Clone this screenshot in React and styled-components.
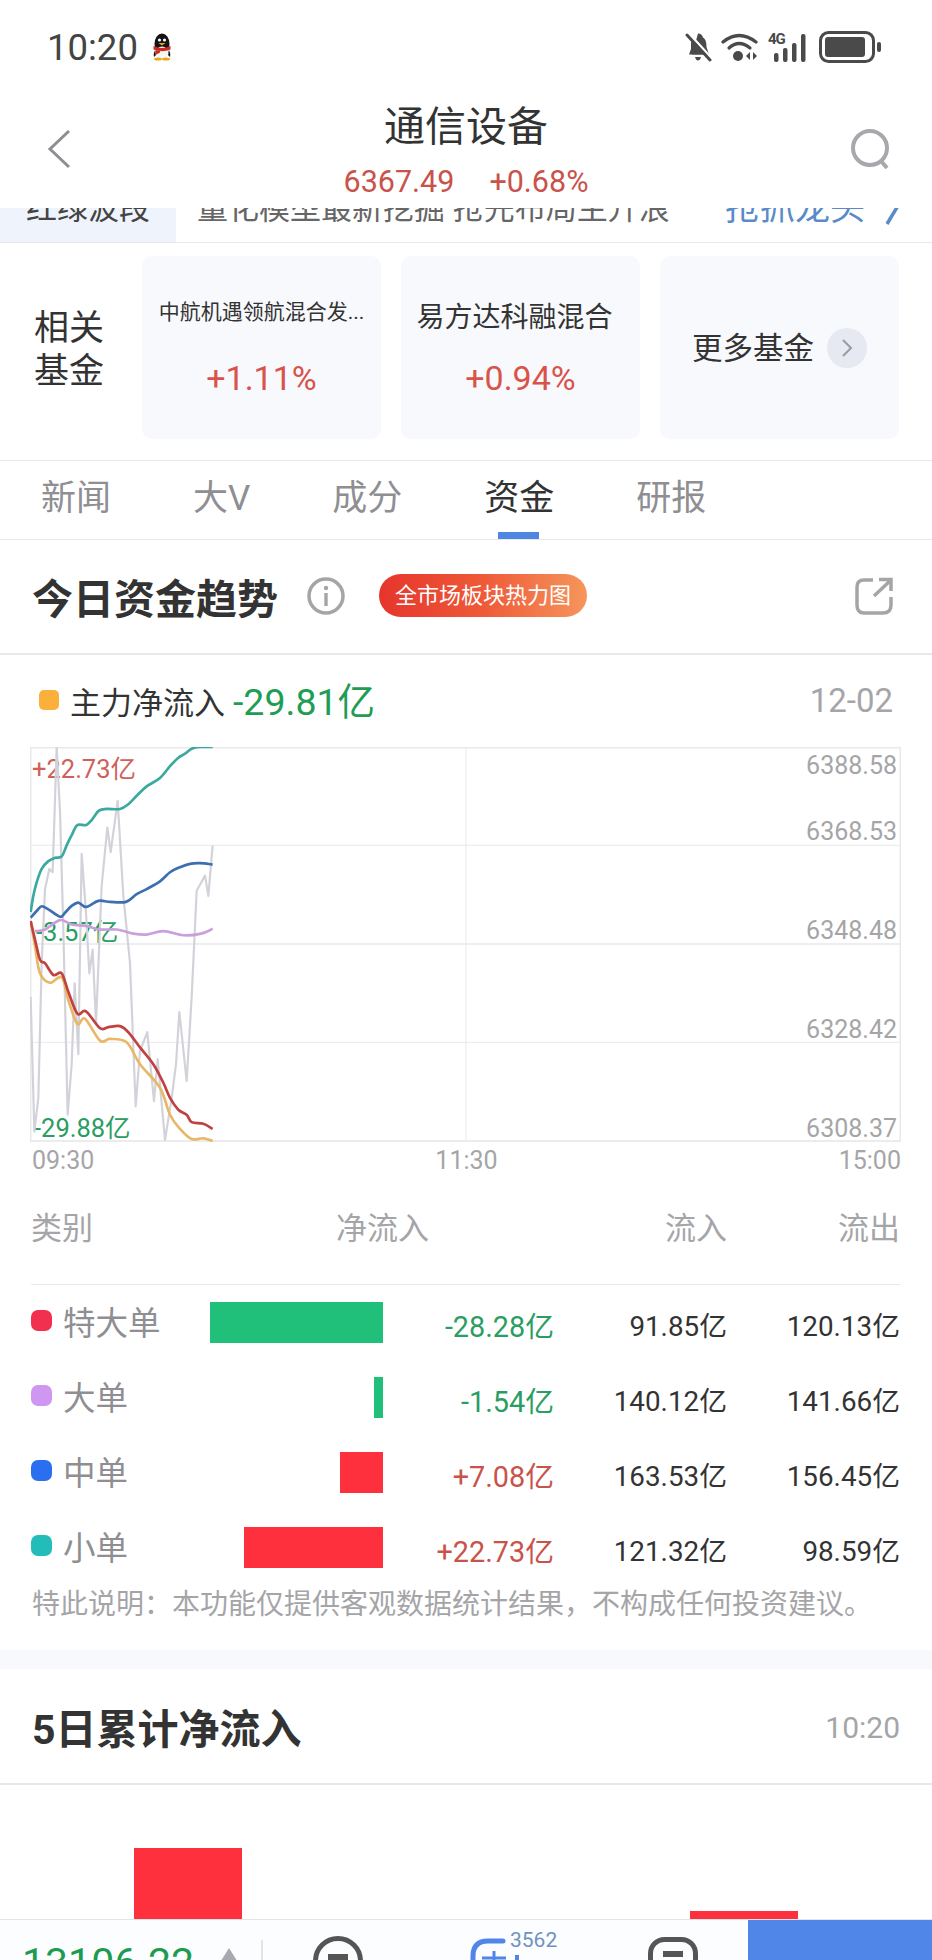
import React from 'react';
import styled, {createGlobalStyle} from 'styled-components';

const GlobalStyle = createGlobalStyle`
  html, body {
    margin: 0;
    padding: 0;
    background: #ffffff;
  }
  body {
    font-family: Roboto, "Noto Sans CJK SC", sans-serif;
    color: #333333;
  }
  * {
    box-sizing: border-box;
  }
`;

const Page = styled.div`
  width: 932px;
  height: 1960px;
  overflow: hidden;
  background: #ffffff;
`;

const StatusBar = styled.div`
  display: flex;
  align-items: center;
  height: 75px;
  padding: 19px 51px 0 47px;
`;
const Time = styled.span`
  font-size: 36.5px;
  color: #444444;
  margin-right: 14px;
`;
const StatusIcons = styled.div`
  display: flex;
  align-items: center;
  gap: 9px;
  margin-left: auto;
`;
const SignalBox = styled.div`
  position: relative;
  width: 42px;
  height: 30px;
`;
const FourG = styled.span`
  position: absolute;
  left: 0;
  top: -2px;
  font-size: 15px;
  line-height: 18px;
  font-weight: 700;
  letter-spacing: -1px;
  color: #4a4a4a;
`;

const NavHeader = styled.div`
  display: grid;
  grid-template-columns: 1fr auto 1fr;
  height: 133px;
  padding: 24px 40px 0 40px;
`;
const BackCell = styled.div`
  padding: 30px 0 0 7px;
`;
const SearchCell = styled.div`
  display: flex;
  justify-content: flex-end;
  padding-top: 30px;
`;
const TitleBlock = styled.div`
  display: flex;
  flex-direction: column;
  align-items: center;
`;
const Title = styled.div`
  font-size: 41px;
  line-height: 56px;
  color: #333333;
`;
const Quote = styled.div`
  display: flex;
  gap: 35px;
  margin-top: 9px;
  font-size: 30.5px;
  line-height: 36px;
  color: #c9524a;
`;

const Ticker = styled.div`
  display: flex;
  height: 35px;
  overflow: hidden;
  border-bottom: 1px solid #e8e8ec;
`;
const TickerTag = styled.div`
  width: 176px;
  padding-left: 26px;
  background: #eff4fc;
  font-size: 31px;
  line-height: 40px;
  color: #444444;
  & > span {
    display: block;
    margin-top: -19px;
  }
`;
const TickerText = styled.div`
  width: 528px;
  padding-left: 21px;
  font-size: 31px;
  line-height: 40px;
  color: #666666;
  white-space: nowrap;
  & > span {
    display: block;
    margin-top: -19px;
  }
`;
const TickerLink = styled.div`
  display: flex;
  gap: 20px;
  padding-left: 21px;
  font-size: 35px;
  line-height: 40px;
  color: #5b8ac8;
  white-space: nowrap;
  & > span {
    display: block;
    margin-top: -19px;
  }
  & > svg {
    margin-top: -8px;
  }
`;

const FundRow = styled.div`
  display: flex;
  align-items: flex-start;
  height: 218px;
  padding: 13px 0 0 34px;
  border-bottom: 1px solid #e8e8ec;
`;
const FundLabel = styled.div`
  width: 108px;
  padding-top: 51px;
  font-size: 35px;
  line-height: 43px;
  color: #333333;
`;
const FundCards = styled.div`
  display: flex;
  gap: 20px;
`;
const FundCard = styled.div`
  display: flex;
  flex-direction: column;
  align-items: center;
  justify-content: center;
  gap: 26px;
  width: 239px;
  height: 183px;
  padding-bottom: 5px;
  border-radius: 10px;
  background: #f8f9fc;
`;
const FundName = styled.div`
  font-size: ${props => props.$size}px;
  line-height: 40px;
  color: #333333;
  white-space: nowrap;
  ${props => props.$wide && 'margin: 6px 12px 0 0;'}
`;
const FundPct = styled.div`
  font-size: 34px;
  line-height: 40px;
  color: #d9534a;
  ${props => props.$wide && 'margin-top: -6px;'}
`;
const MoreCard = styled(FundCard)`
  flex-direction: row;
  gap: 13px;
  padding: 0 0 3px;
  font-size: 30.5px;
  color: #333333;
`;
const MoreArrow = styled.span`
  display: flex;
  align-items: center;
  justify-content: center;
  width: 40px;
  height: 40px;
  margin-top: 3px;
  border-radius: 50%;
  background: #e6e8f2;
`;

const Tabs = styled.div`
  display: flex;
  gap: 82px;
  height: 79px;
  padding-left: 41px;
  border-bottom: 1px solid #e8e8ec;
`;
const Tab = styled.div`
  position: relative;
  font-size: 35px;
  line-height: 76px;
  color: ${props => (props.$active ? '#333333' : '#8e8e93')};
  ${props =>
    props.$active &&
    `&::after {
      content: '';
      position: absolute;
      left: 14px;
      bottom: 0;
      width: 41px;
      height: 7px;
      background: #4f86e3;
    }`}
`;

const SectionHead = styled.div`
  display: flex;
  align-items: center;
  height: 115px;
  padding: 0 39px 2px 32px;
  border-bottom: 2px solid #e8e8ec;
`;
const SectionTitle = styled.div`
  font-size: 41px;
  font-weight: 700;
  color: #333333;
`;
const InfoWrap = styled.div`
  display: flex;
  margin-left: 29px;
`;
const HeatBadge = styled.div`
  margin-left: 34px;
  width: 208px;
  height: 43px;
  border-radius: 22px;
  background: linear-gradient(90deg, #e6352c 0%, #ee5a38 50%, #f6955c 100%);
  color: #ffffff;
  font-size: 22px;
  line-height: 43px;
  text-align: center;
`;
const ShareWrap = styled.div`
  display: flex;
  margin-left: auto;
`;

const LegendRow = styled.div`
  display: flex;
  align-items: center;
  height: 92px;
  padding: 0 39px 2px 39px;
`;
const LegendDot = styled.span`
  width: 20px;
  height: 20px;
  border-radius: 5px;
  background: #fbb03b;
  margin-right: 11px;
`;
const LegendText = styled.span`
  font-size: 31px;
  color: #333333;
`;
const LegendValue = styled.span`
  margin: 0 0 4px 8px;
  font-size: 37.5px;
  color: #1f9d55;
`;
const LegendDate = styled.span`
  margin-left: auto;
  font-size: 33px;
  color: #a5a5a8;
`;

const ChartBox = styled.div`
  position: relative;
  width: 871px;
  height: 395px;
  margin-left: 30px;
`;
const ChartSvg = styled.svg`
  position: absolute;
  inset: 0;
  display: block;
`;
const PriceLabel = styled.span`
  position: absolute;
  right: 4px;
  top: ${props => props.$top}px;
  font-size: 25px;
  line-height: 30px;
  color: #a5a5a8;
`;
const FlowLabel = styled.span`
  position: absolute;
  left: ${props => props.$left}px;
  top: ${props => props.$top}px;
  font-size: 25.5px;
  line-height: 30px;
  color: ${props => props.$color};
`;
const AxisRow = styled.div`
  display: flex;
  justify-content: space-between;
  align-items: center;
  width: 869px;
  height: 36px;
  margin-left: 32px;
  font-size: 25px;
  color: #a5a5a8;
`;

const TableHead = styled.div`
  display: grid;
  grid-template-columns: 305px 1fr 173px 173px;
  margin: 0 32px 0 31px;
  padding: 31px 0 35px;
  border-bottom: 1px solid #e8e8ec;
  font-size: 31px;
  line-height: 40px;
  color: #a5a5a8;
`;
const HeadRight = styled.span`
  text-align: right;
`;
const TableRow = styled.div`
  display: grid;
  grid-template-columns: 179px 173px 171px 173px 173px;
  align-items: center;
  height: 75px;
  margin: 0 32px 0 31px;
`;
const RowName = styled.div`
  display: flex;
  align-items: center;
  gap: 11px;
  padding-bottom: 4px;
  font-size: 32.5px;
  color: #8e8e93;
`;
const RowDot = styled.span`
  width: 21px;
  height: 21px;
  border-radius: 7px;
  background: ${props => props.$color};
`;
const BarCell = styled.div`
  display: flex;
  justify-content: flex-end;
`;
const Bar = styled.div`
  height: 41px;
  background: ${props => (props.$up ? '#ff303e' : '#20c07b')};
`;
const NetValue = styled.div`
  padding-top: 3px;
  text-align: right;
  font-size: 28.8px;
  color: ${props => (props.$up ? '#c9524a' : '#2a9d62')};
`;
const FlowValue = styled.div`
  padding-top: 3px;
  text-align: right;
  font-size: 27.8px;
  color: #333333;
`;
const Notice = styled.div`
  padding: 2px 0 27px 32px;
  font-size: 28px;
  line-height: 36px;
  color: #a5a5a8;
  white-space: nowrap;
`;
const GapBand = styled.div`
  height: 19px;
  background: #f8f9fc;
`;

const FiveDayHead = styled.div`
  display: flex;
  align-items: center;
  justify-content: space-between;
  height: 116px;
  padding: 0 32px 0 32px;
  border-bottom: 2px solid #e8e8ec;
`;
const FiveDayTitle = styled.div`
  font-size: 41px;
  font-weight: 700;
  color: #333333;
`;
const FiveDayTime = styled.div`
  padding-top: 2px;
  font-size: 30px;
  color: #a5a5a8;
`;
const FiveDayChart = styled.div`
  display: grid;
  grid-template-columns: repeat(5, 139px);
  align-items: end;
  height: 134px;
  padding-left: 118px;
`;
const FiveDayCol = styled.div`
  display: flex;
  justify-content: center;
`;
const FiveDayBar = styled.div`
  width: 108px;
  background: #ff303e;
`;

const BottomBar = styled.div`
  display: flex;
  height: 41px;
  overflow: hidden;
  border-top: 1px solid #e4e4e6;
  background: #fcfdfe;
`;
const IndexCell = styled.div`
  display: flex;
  width: 263px;
  height: 60px;
  margin-top: 20px;
  padding-left: 22px;
  border-right: 2px solid #e4e4e6;
`;
const IndexValue = styled.span`
  font-size: 41px;
  line-height: 48px;
  margin-top: -1px;
  color: #1c9c50;
`;
const IndexArrow = styled.span`
  width: 0;
  height: 0;
  margin: 8px 0 0 25px;
  border-left: 10px solid transparent;
  border-right: 10px solid transparent;
  border-bottom: 16px solid #a8a8b0;
`;
const Tools = styled.div`
  display: grid;
  grid-template-columns: 157px 178px 1fr;
  flex: 1;
  padding-left: 50px;
`;
const Tool = styled.div`
  position: relative;
  padding-top: ${props => props.$top}px;
`;
const ToolCount = styled.span`
  position: absolute;
  left: 40px;
  top: 8px;
  font-size: 21px;
  line-height: 24px;
  color: #6f92c0;
`;
const ActionButton = styled.div`
  width: 184px;
  background: #4f86e8;
`;

const Penguin = () => (
  <svg width="20" height="28" viewBox="0 0 20 28">
    <ellipse cx="10" cy="11" rx="7.5" ry="10.5" fill="#141414" />
    <path d="M3 17 Q1 21 2 24 L5 21 Z M17 17 Q19 21 18 24 L15 21 Z" fill="#141414" />
    <ellipse cx="10" cy="20" rx="6.5" ry="6.5" fill="#f6f6f6" />
    <circle cx="7.5" cy="7" r="1.6" fill="#ffffff" />
    <circle cx="12.5" cy="7" r="1.6" fill="#ffffff" />
    <path d="M6.5 10 H13.5 L10 12.5 Z" fill="#e8a818" />
    <path d="M1.5 13 Q10 17 18.5 13 L18.5 16.5 Q10 20 1.5 16.5 Z" fill="#cf2a20" />
    <path d="M4 17 L3.5 22 L8 19.5 L8 18 Z" fill="#cf2a20" />
    <ellipse cx="6" cy="26" rx="4" ry="1.6" fill="#e8a818" />
    <ellipse cx="14" cy="26" rx="4" ry="1.6" fill="#e8a818" />
  </svg>
);

const BellOff = () => (
  <svg width="28" height="30" viewBox="0 0 28 30">
    <path d="M14 1.5 C17 1.5 18.5 3.5 19 5.5 C22 7.5 22.5 11 22.5 15 L25 22.5 L8 22.5 Z" fill="#4a4a4a" />
    <path d="M5 22.5 L7 17 L7 12 C7 10.5 7.2 9 8 8 L20 22.5 Z" fill="#4a4a4a" />
    <path d="M11 25 H17 Q16 28.5 14 28.5 Q12 28.5 11 25 Z" fill="#4a4a4a" />
    <path d="M5 1.5 L28 26.5" stroke="#ffffff" strokeWidth="2.5" />
    <path d="M3 3 L26 28" stroke="#4a4a4a" strokeWidth="3" strokeLinecap="round" />
  </svg>
);

const Wifi = () => (
  <svg width="38" height="30" viewBox="0 0 38 30">
    <g fill="none" stroke="#4a4a4a" strokeWidth="3.2" strokeLinecap="round">
      <path d="M2 10 Q18 -3 35 10" />
      <path d="M8 16 Q18 7 29 16" />
    </g>
    <circle cx="17" cy="24" r="5" fill="#4a4a4a" />
    <path d="M29 20 V28 L25 24 Z M32 20 V28 L36 24 Z" fill="#4a4a4a" />
  </svg>
);

const Signal = () => (
  <svg width="42" height="30" viewBox="0 0 42 30">
    <g fill="#4a4a4a">
      <rect x="6" y="21" width="4.5" height="9" rx="2" />
      <rect x="15" y="16" width="4.5" height="14" rx="2" />
      <rect x="24" y="11" width="4.5" height="19" rx="2" />
      <rect x="33" y="2" width="4.5" height="28" rx="2" />
    </g>
  </svg>
);

const Battery = () => (
  <svg width="62" height="32" viewBox="0 0 62 32">
    <rect x="1.5" y="1.5" width="53" height="29" rx="8" fill="none" stroke="#4a4a4a" strokeWidth="3" />
    <rect x="6" y="6" width="40" height="20" rx="3" fill="#4a4a4a" />
    <rect x="58" y="11" width="4" height="10" rx="2" fill="#4a4a4a" />
  </svg>
);

const BackIcon = () => (
  <svg width="24" height="40" viewBox="0 0 24 40">
    <path d="M22 2 L3 20 L22 38" fill="none" stroke="#8e8e93" strokeWidth="3" />
  </svg>
);

const SearchIcon = () => (
  <svg width="42" height="40" viewBox="0 0 42 40">
    <circle cx="20" cy="19" r="17" fill="none" stroke="#a8a8ac" strokeWidth="4" />
    <path d="M31 32 L37 39" stroke="#a8a8ac" strokeWidth="4" />
  </svg>
);

const Chevron = () => (
  <svg width="12" height="20" viewBox="0 0 12 20">
    <path d="M2 2 L10 10 L2 18" fill="none" stroke="#9a9aa6" strokeWidth="2" />
  </svg>
);

const InfoIcon = () => (
  <svg width="38" height="38" viewBox="0 0 38 38">
    <circle cx="19" cy="19" r="17" fill="none" stroke="#a5a5a8" strokeWidth="3.5" />
    <circle cx="19" cy="11" r="2.2" fill="#a5a5a8" />
    <rect x="17.3" y="16" width="3.4" height="13" fill="#a5a5a8" />
  </svg>
);

const ShareIcon = () => (
  <svg width="38" height="38" viewBox="0 0 38 38">
    <g fill="none" stroke="#a5a5a8" strokeWidth="3.5">
      <path d="M18 3 H9 Q2 3 2 10 V28 Q2 36 9 36 H28 Q36 36 36 28 V20" />
      <path d="M19 19 L36 3 M24 2.5 H36 V14" />
    </g>
  </svg>
);

const TickerArrow = () => (
  <svg width="16" height="26" viewBox="0 0 16 26">
    <path d="M2 24 L14 4" stroke="#5b8ac8" strokeWidth="3.5" fill="none" />
  </svg>
);

const ToolRound = () => (
  <svg width="50" height="40" viewBox="0 0 50 40">
    <circle cx="25" cy="25" r="22.5" fill="none" stroke="#555555" strokeWidth="5" />
    <rect x="15" y="18" width="20" height="7" fill="#555555" />
  </svg>
);

const ToolPlus = () => (
  <svg width="50" height="40" viewBox="0 0 50 40">
    <path d="M33 3 H18 Q3 3 3 18 V40" fill="none" stroke="#4f86e8" strokeWidth="5" strokeLinecap="round" />
    <path d="M24 13 V40 M12 20 H36" fill="none" stroke="#4f86e8" strokeWidth="3" />
    <path d="M47 17 V40" fill="none" stroke="#4f86e8" strokeWidth="4" />
  </svg>
);

const ToolNote = () => (
  <svg width="50" height="40" viewBox="0 0 50 40">
    <rect x="2.5" y="2.5" width="45" height="60" rx="14" fill="none" stroke="#555555" strokeWidth="5" />
    <rect x="15" y="14" width="20" height="6" fill="#555555" />
  </svg>
);

// catmull-rom through the sampled points so the flow lines don't look angular
const toSmoothPath = str => {
  const pts = str.split(' ').map(p => p.split(',').map(Number));
  let d = `M${pts[0][0]} ${pts[0][1]}`;
  for (let i = 0; i < pts.length - 1; i++) {
    const p0 = pts[i - 1] || pts[i];
    const p1 = pts[i];
    const p2 = pts[i + 1];
    const p3 = pts[i + 2] || p2;
    const c1x = p1[0] + (p2[0] - p0[0]) / 6;
    const c1y = p1[1] + (p2[1] - p0[1]) / 6;
    const c2x = p2[0] - (p3[0] - p1[0]) / 6;
    const c2y = p2[1] - (p3[1] - p1[1]) / 6;
    d += ` C${c1x} ${c1y} ${c2x} ${c2y} ${p2[0]} ${p2[1]}`;
  }
  return d;
};

const GRAY_LINE =
  '92,1000 103,1400 115,1300 125,900 135,680 148,620 158,630 170,258 180,450 190,800 203,1350 215,1200 224,960 235,1170 245,575 258,750 268,930 278,860 288,1080 305,670 322,497 332,570 353,418 370,700 390,900 407,1325 420,1160 442,1105 462,1310 473,1185 495,1425 515,1300 528,1200 538,1045 560,1250 575,1000 590,685 615,640 625,700 638,550';

const LINES = [
  {
    color: '#c9a0dc',
    points:
      '105,805 135,800 180,772 215,785 260,790 300,800 350,800 400,812 440,815 490,805 550,817 600,813 638,798',
  },
  {
    color: '#e8b767',
    points:
      '92,775 105,850 120,930 150,958 185,942 205,1010 232,1080 255,1065 300,1130 330,1125 380,1135 420,1200 480,1270 510,1350 540,1392 575,1422 610,1420 638,1428',
  },
  {
    color: '#c0413f',
    points:
      '92,775 105,830 120,890 135,900 160,935 185,930 205,985 232,1050 258,1043 300,1093 325,1090 360,1087 385,1105 420,1150 460,1200 490,1255 510,1300 535,1335 560,1350 575,1372 610,1377 638,1392',
  },
  {
    color: '#3d6fb0',
    points:
      '92,765 110,745 125,731 145,740 180,762 195,750 215,730 235,720 258,733 295,715 330,718 378,718 410,695 440,680 480,657 510,630 540,615 570,605 600,603 638,607',
  },
  {
    color: '#3aa99f',
    points:
      '92,748 100,700 110,660 125,620 145,597 165,587 185,583 200,550 215,520 232,490 258,490 275,475 297,447 320,442 360,442 385,428 410,403 440,375 480,350 510,315 535,290 555,278 575,263 600,258 638,258',
  },
];

const PRICES = [
  {label: '6388.58', top: 4},
  {label: '6368.53', top: 70},
  {label: '6348.48', top: 169},
  {label: '6328.42', top: 268},
  {label: '6308.37', top: 367},
];

const ROWS = [
  {name: '特大单', dot: '#f0304e', net: -28.28, label: '-28.28亿', inflow: '91.85亿', outflow: '120.13亿'},
  {name: '大单', dot: '#cf97f2', net: -1.54, label: '-1.54亿', inflow: '140.12亿', outflow: '141.66亿'},
  {name: '中单', dot: '#2a6ff0', net: 7.08, label: '+7.08亿', inflow: '163.53亿', outflow: '156.45亿'},
  {name: '小单', dot: '#22bdb8', net: 22.73, label: '+22.73亿', inflow: '121.32亿', outflow: '98.59亿'},
];

const Chart = () => (
  <ChartBox>
    <FlowLabel $left={2} $top={7} $color="#d0605a">+22.73亿</FlowLabel>
    <FlowLabel $left={6} $top={170} $color="#2a9d62">-3.57亿</FlowLabel>
    <FlowLabel $left={4} $top={366} $color="#2a9d62">-29.88亿</FlowLabel>
    {PRICES.map(price => (
      <PriceLabel key={price.label} $top={price.top}>{price.label}</PriceLabel>
    ))}
    <ChartSvg width="871" height="395" viewBox="90 258 2613 1173" preserveAspectRatio="none">
      <g stroke="#e9e9ec" fill="none">
        <rect x="92" y="260" width="2609" height="1168" strokeWidth="5" />
        <path d="M92 550 H2700 M92 1135 H2700 M1398 258 V1428" strokeWidth="3" />
        <path d="M92 843 H2700" strokeWidth="5" />
      </g>
      <polyline points={GRAY_LINE} fill="none" stroke="#d2d2da" strokeWidth="6.5" strokeLinejoin="round" />
      {LINES.map(line => (
        <path
          key={line.color}
          d={toSmoothPath(line.points)}
          fill="none"
          stroke={line.color}
          strokeWidth="8"
          strokeLinejoin="round"
        />
      ))}
    </ChartSvg>
  </ChartBox>
);

export default function App() {
  return (
    <Page>
      <GlobalStyle />
      <StatusBar>
        <Time>10:20</Time>
        <Penguin />
        <StatusIcons>
          <BellOff />
          <Wifi />
          <SignalBox>
            <FourG>4G</FourG>
            <Signal />
          </SignalBox>
          <Battery />
        </StatusIcons>
      </StatusBar>

      <NavHeader>
        <BackCell><BackIcon /></BackCell>
        <TitleBlock>
          <Title>通信设备</Title>
          <Quote>
            <span>6367.49</span>
            <span>+0.68%</span>
          </Quote>
        </TitleBlock>
        <SearchCell><SearchIcon /></SearchCell>
      </NavHeader>

      <Ticker>
        <TickerTag><span>红绿波段</span></TickerTag>
        <TickerText><span>量化模型最新挖掘 抢先布局主升浪</span></TickerText>
        <TickerLink>
          <span>抢抓龙头</span>
          <TickerArrow />
        </TickerLink>
      </Ticker>

      <FundRow>
        <FundLabel>相关<br />基金</FundLabel>
        <FundCards>
          <FundCard>
            <FundName $size={21}>中航机遇领航混合发...</FundName>
            <FundPct>+1.11%</FundPct>
          </FundCard>
          <FundCard>
            <FundName $size={28} $wide>易方达科融混合</FundName>
            <FundPct $wide>+0.94%</FundPct>
          </FundCard>
          <MoreCard>
            更多基金
            <MoreArrow><Chevron /></MoreArrow>
          </MoreCard>
        </FundCards>
      </FundRow>

      <Tabs>
        <Tab>新闻</Tab>
        <Tab>大V</Tab>
        <Tab>成分</Tab>
        <Tab $active>资金</Tab>
        <Tab>研报</Tab>
      </Tabs>

      <SectionHead>
        <SectionTitle>今日资金趋势</SectionTitle>
        <InfoWrap><InfoIcon /></InfoWrap>
        <HeatBadge>全市场板块热力图</HeatBadge>
        <ShareWrap><ShareIcon /></ShareWrap>
      </SectionHead>

      <LegendRow>
        <LegendDot />
        <LegendText>主力净流入</LegendText>
        <LegendValue>-29.81亿</LegendValue>
        <LegendDate>12-02</LegendDate>
      </LegendRow>

      <Chart />
      <AxisRow>
        <span>09:30</span>
        <span>11:30</span>
        <span>15:00</span>
      </AxisRow>

      <TableHead>
        <span>类别</span>
        <span>净流入</span>
        <HeadRight>流入</HeadRight>
        <HeadRight>流出</HeadRight>
      </TableHead>
      {ROWS.map(row => (
        <TableRow key={row.name}>
          <RowName>
            <RowDot $color={row.dot} />
            {row.name}
          </RowName>
          <BarCell>
            <Bar $up={row.net > 0} style={{width: (Math.abs(row.net) / 28.28) * 173}} />
          </BarCell>
          <NetValue $up={row.net > 0}>{row.label}</NetValue>
          <FlowValue>{row.inflow}</FlowValue>
          <FlowValue>{row.outflow}</FlowValue>
        </TableRow>
      ))}
      <Notice>特此说明：本功能仅提供客观数据统计结果，不构成任何投资建议。</Notice>
      <GapBand />

      <FiveDayHead>
        <FiveDayTitle>5日累计净流入</FiveDayTitle>
        <FiveDayTime>10:20</FiveDayTime>
      </FiveDayHead>
      <FiveDayChart>
        {[71, 0, 0, 0, 8].map((height, i) => (
          <FiveDayCol key={i}>
            <FiveDayBar style={{height}} />
          </FiveDayCol>
        ))}
      </FiveDayChart>

      <BottomBar>
        <IndexCell>
          <IndexValue>13106.22</IndexValue>
          <IndexArrow />
        </IndexCell>
        <Tools>
          <Tool $top={16}><ToolRound /></Tool>
          <Tool $top={18}>
            <ToolPlus />
            <ToolCount>3562</ToolCount>
          </Tool>
          <Tool $top={17}><ToolNote /></Tool>
        </Tools>
        <ActionButton />
      </BottomBar>
    </Page>
  );
}
